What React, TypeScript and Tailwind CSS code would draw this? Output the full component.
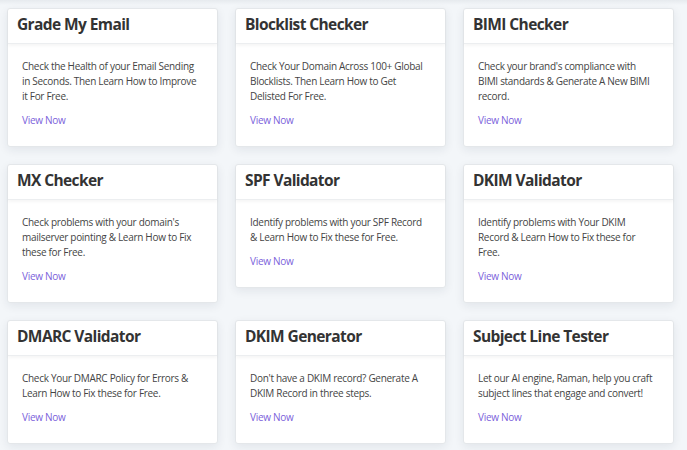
import React from "react";

const cards = [
  { title: "Grade My Email", text: "Check the Health of your Email Sending in Seconds. Then Learn How to Improve it For Free." },
  { title: "Blocklist Checker", text: "Check Your Domain Across 100+ Global Blocklists. Then Learn How to Get Delisted For Free." },
  { title: "BIMI Checker", text: "Check your brand's compliance with BIMI standards & Generate A New BIMI record." },
  { title: "MX Checker", text: "Check problems with your domain's mailserver pointing & Learn How to Fix these for Free." },
  { title: "SPF Validator", text: "Identify problems with your SPF Record & Learn How to Fix these for Free." },
  { title: "DKIM Validator", text: "Identify problems with Your DKIM Record & Learn How to Fix these for Free." },
  { title: "DMARC Validator", text: "Check Your DMARC Policy for Errors & Learn How to Fix these for Free." },
  { title: "DKIM Generator", text: "Don't have a DKIM record? Generate A DKIM Record in three steps." },
  { title: "Subject Line Tester", text: "Let our AI engine, Raman, help you craft subject lines that engage and convert!" },
];

export default function App() {
  return (
    <div
      className="w-[687px] h-[450px] overflow-hidden bg-[#f3f6f9]"
      style={{ fontFamily: '"Open Sans", "Noto Sans", sans-serif' }}
    >
      <div className="h-[5px] bg-gradient-to-b from-[#e6eaee] to-[#f3f6f9]" />
      <div className="grid grid-cols-3 gap-x-[17px] gap-y-[17px] items-start pl-[7px] pr-[13px] pt-[3px]">
        {cards.map((c) => (
          <div
            key={c.title}
            className="bg-white rounded-[3px] border border-[#e4e7ea] shadow-[0_3px_10px_rgba(30,40,60,0.08)]"
          >
            <div className="h-[35px] flex items-center pb-[2px] px-[9px] border-b border-[#eceef0] shadow-[0_2px_3px_rgba(0,0,0,0.04)]">
              <h2 className="text-[15.5px] font-bold text-[#333] tracking-[-0.6px] leading-none">{c.title}</h2>
            </div>
            <div className="pt-[15px] pb-[18px] pl-[14px] pr-[16px]">
              <p className="text-[10px] leading-[15px] text-[#444] tracking-[-0.3px]">{c.text}</p>
              <a className="block mt-[9px] text-[10px] leading-[15px] text-[#7b5fdb] tracking-[-0.3px]">View Now</a>
            </div>
          </div>
        ))}
      </div>
    </div>
  );
}
